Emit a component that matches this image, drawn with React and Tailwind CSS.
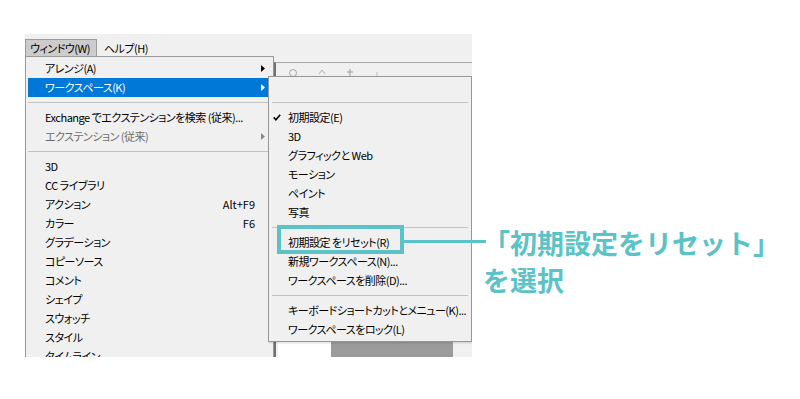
import React from "react";

function Arrow({ color = "#000" }) {
  return (
    <svg width="4" height="7" viewBox="0 0 4 7" className="shrink-0">
      <path d="M0 0 L4 3.5 L0 7 Z" fill={color} />
    </svg>
  );
}

function Check() {
  return (
    <svg width="8" height="7" viewBox="0 0 8 7">
      <path d="M0.7 3.4 L2.9 5.8 L7.2 0.8" fill="none" stroke="#000" strokeWidth="1.6" />
    </svg>
  );
}

function MainItem({ label, shortcut, arrow, disabled, active }) {
  const color = active ? "bg-[#0078d7] text-white" : disabled ? "text-[#6d6d6d]" : "text-black";
  const pr = shortcut ? "pr-[16px]" : "pr-[6px]";
  return (
    <div className={`mx-[2px] h-[19px] flex items-center pl-[17px] ${pr} ${color}`}>
      <span className="flex-1 min-w-0 whitespace-nowrap leading-[19px]">{label}</span>
      {shortcut && <span className="shrink-0 whitespace-nowrap leading-[19px] tracking-normal">{shortcut}</span>}
      {arrow && <Arrow color={active ? "#fff" : disabled ? "#8a8a8a" : "#000"} />}
    </div>
  );
}

function SubItem({ label, checked }) {
  return (
    <div className="mx-[2px] h-[19px] flex items-center pl-[2px] text-black">
      <span className="w-[15px] shrink-0 flex items-center">{checked && <Check />}</span>
      <span className="whitespace-nowrap leading-[19px]">{label}</span>
    </div>
  );
}

function Sep({ inset = "mx-[2px]" }) {
  return (
    <div className={`h-[11px] flex items-center ${inset}`}>
      <div className="h-px flex-1 bg-[#c2c2c2]" />
    </div>
  );
}

export default function App() {
  return (
    <div className="relative w-[800px] h-[399px] bg-white overflow-hidden font-['Noto_Sans_CJK_JP',sans-serif] text-black">
      {/* application window crop */}
      <div className="relative ml-[25px] mt-[34px] w-[447px] h-[323px] bg-[#f0f0f0] overflow-hidden flex flex-col text-[11px] tracking-[-0.5px] [font-feature-settings:'palt']">
        {/* menu bar */}
        <div className="h-[23px] shrink-0 flex items-start">
          <div className="mt-[5px] h-[18px] w-[72px] bg-[#cccccc] border border-[#9a9a9a] flex items-center pl-[4px] leading-none whitespace-nowrap">
            ウィンドウ(W)
          </div>
          <div className="mt-[5px] h-[18px] ml-[7px] flex items-center leading-none whitespace-nowrap">ヘルプ(H)</div>
        </div>
        {/* content behind menus */}
        <div className="flex-1 flex">
          <div className="w-[249px] shrink-0" />
          <div className="flex-1 flex flex-col pt-[5px]">
            <div className="flex-1 flex flex-col border-t border-[#a8a8a8] border-l-2 border-l-[#707070]">
              <div className="h-[20px] flex items-center pl-[12px] gap-[20px]">
                <svg width="10" height="10" viewBox="0 0 10 10"><circle cx="5" cy="5" r="3.5" fill="none" stroke="#a8a8a8" strokeWidth="1" /></svg>
                <svg width="8" height="10" viewBox="0 0 8 10"><path d="M1 6 L4 2 L7 6" fill="none" stroke="#b0b0b0" /></svg>
                <svg width="8" height="10" viewBox="0 0 8 10"><path d="M4 1 V8 M1 4 H7" stroke="#9a9a9a" /></svg>
                <svg width="6" height="10" viewBox="0 0 6 10"><path d="M3 4 V8" stroke="#c0c0c0" /></svg>
              </div>
              <div className="flex-1" />
              <div className="h-[15px] flex">
                <div className="w-[2px]" />
                <div className="w-[53px] bg-white" />
                <div className="w-[122px] bg-[#9b9b9b]" />
                <div className="flex-1 bg-[#f0f0f0]" />
              </div>
            </div>
          </div>
        </div>

        {/* main dropdown menu */}
        <div className="absolute left-0 top-[22px] w-[249px] h-[400px] bg-[#f0f0f0] border border-[#979797] pt-[2px] flex flex-col">
          <MainItem label="アレンジ(A)" arrow />
          <MainItem label="ワークスペース(K)" arrow active />
          <Sep />
          <MainItem label="Exchange でエクステンションを検索 (従来)..." />
          <MainItem label="エクステンション (従来)" arrow disabled />
          <Sep />
          <MainItem label="3D" />
          <MainItem label="CC ライブラリ" />
          <MainItem label="アクション" shortcut="Alt+F9" />
          <MainItem label="カラー" shortcut="F6" />
          <MainItem label="グラデーション" />
          <MainItem label="コピーソース" />
          <MainItem label="コメント" />
          <MainItem label="シェイプ" />
          <MainItem label="スウォッチ" />
          <MainItem label="スタイル" />
          <MainItem label="タイムライン" />
        </div>

        {/* submenu */}
        <div className="absolute left-[243px] top-[42px] w-[204px] bg-[#f0f0f0] border border-[#979797] pt-[1px] pb-[2px] flex flex-col shadow-[1px_1px_2px_rgba(0,0,0,0.15)]">
          <div className="h-[19px]" />
          <Sep inset="mx-[3px]" />
          <SubItem label="初期設定(E)" checked />
          <SubItem label="3D" />
          <SubItem label="グラフィックと Web" />
          <SubItem label="モーション" />
          <SubItem label="ペイント" />
          <SubItem label="写真" />
          <Sep inset="mx-[3px]" />
          <SubItem label="初期設定 をリセット(R)" />
          <SubItem label="新規ワークスペース(N)..." />
          <SubItem label="ワークスペースを削除(D)..." />
          <Sep inset="mx-[3px]" />
          <SubItem label="キーボードショートカットとメニュー(K)..." />
          <SubItem label="ワークスペースをロック(L)" />
        </div>
      </div>

      {/* annotation overlay */}
      <div className="absolute left-[277px] top-[225px] w-[127px] h-[29px] border-[4px] border-[#5bc3c7]" />
      <div className="absolute left-[404px] top-[240px] w-[82px] h-[3px] bg-[#5bc3c7]" />
      <div className="absolute left-[483px] top-[224px] text-[27px] leading-[37px] font-bold text-[#5bc3c7] whitespace-nowrap">
        <div>「初期設定をリセット」</div>
        <div>を選択</div>
      </div>
    </div>
  );
}
